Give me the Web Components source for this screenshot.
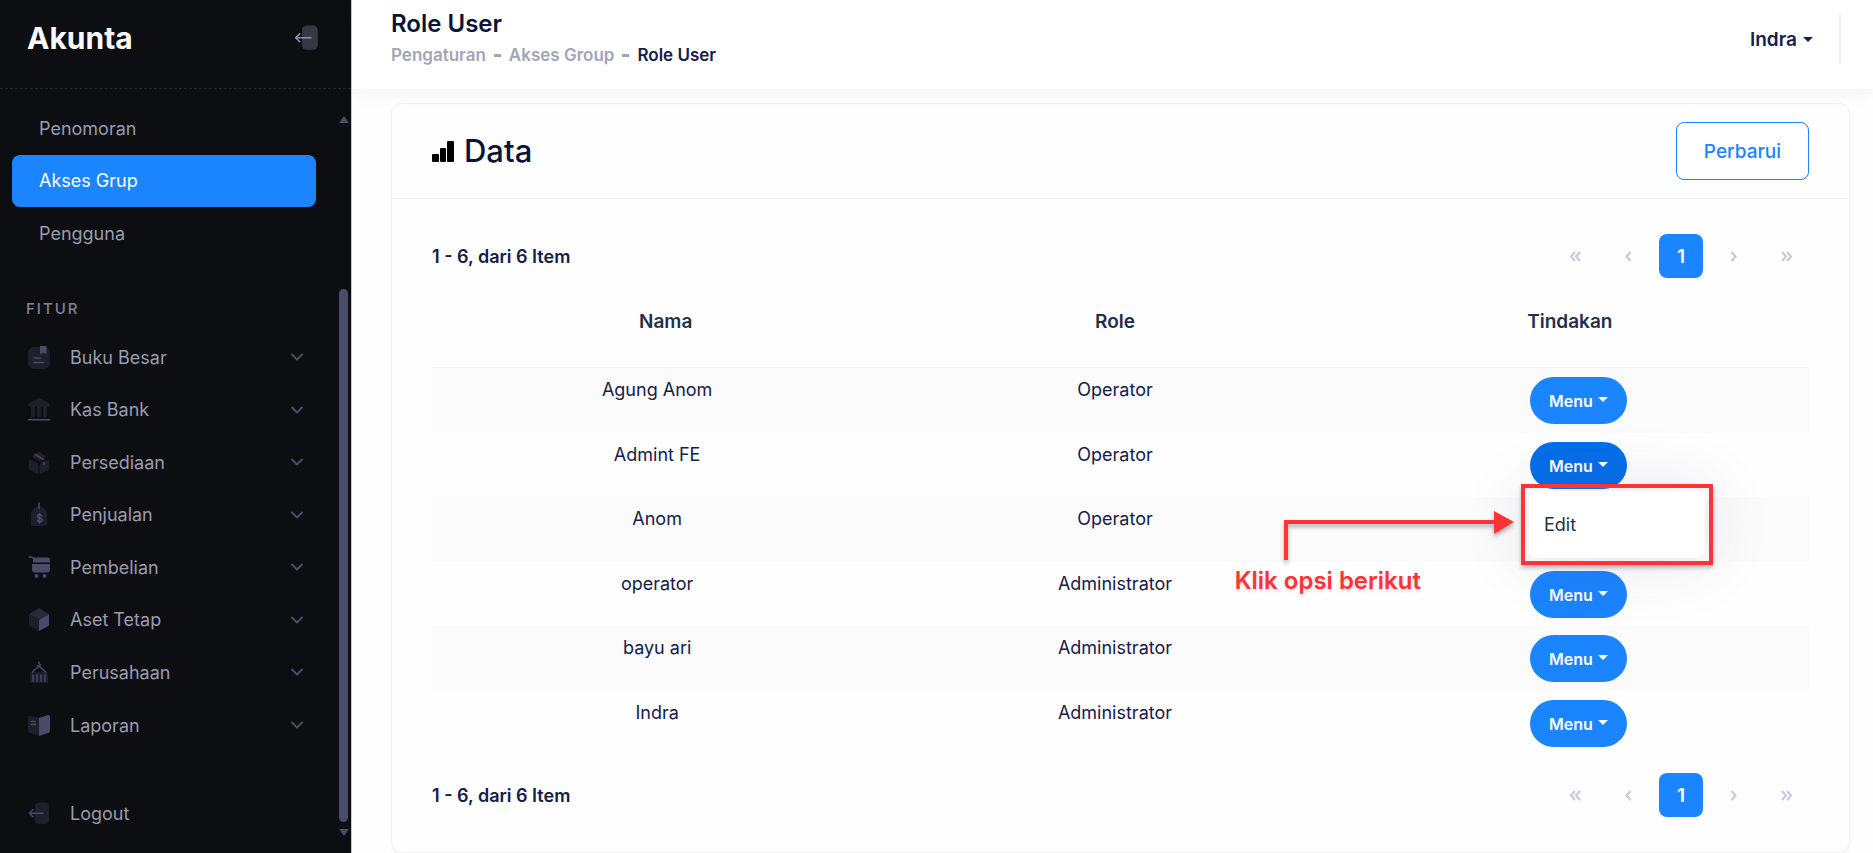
<!DOCTYPE html>
<html lang="id">
<head>
<meta charset="utf-8">
<title>Akunta - Role User</title>
<style>
  html, body { margin: 0; height: 100%; }
  body { background: #fefefe; color: #071437; font-family: Inter, "Liberation Sans", sans-serif; font-size: 18px; }
</style>
</head>
<body>
<akunta-app></akunta-app>
<script>
const define = (name, html, setup) => {
  const tpl = document.createElement('template');
  tpl.innerHTML = '<style>*{box-sizing:border-box}button{font:inherit;cursor:pointer}a{color:inherit;text-decoration:none}</style>' + html;
  customElements.define(name, class extends HTMLElement {
    constructor() {
      super();
      this.attachShadow({ mode: 'open' }).appendChild(tpl.content.cloneNode(true));
    }
    connectedCallback() { if (setup) setup(this, this.shadowRoot); }
  });
};

/* Two-tone icon set: .d is the faint layer, .l the brighter one. */
const ICONS = {
  ledger: '<rect class="d" x="0" y="1" width="22" height="22" rx="6"/><path class="l" d="M12 0h6.500v8.500l-3.200-2-3.300 2z"/><path class="s" d="M6 12h6.500M6 16.500h9.500"/>',
  bank: '<path class="d" d="M11 0l10 5q1.500 3-.500 3.500h-19Q-.500 8 1 5zM3 8h4v11H3zM9 8h4v11H9zM15 8h4v11h-4z"/><path class="s" d="M.500 21.700h21"/>',
  boxes: '<path class="d" d="M4.500 5L9.500 1.500q1.500-.800 3 0l5 3.500q1 .700 0 1.500L13 9.800q-1.200.700-2.500 0L4.500 6.500zM.800 10.500q.300-2.500 2.500-1.500L9 12q1.300.700 1.300 2v8q-.200 1.200-1.500.700L2 19q-1.200-.700-1.200-2zM21.200 10.500q-.300-2.500-2.500-1.500L13 12q-1.300.700-1.300 2v8q.2 1.200 1.500.700L20 19q1.200-.700 1.200-2z"/><path class="s" d="M7 3.500l8.500 4.800M15.800 11.500v2"/>',
  tag: '<path class="d" d="M5 6.500L9 3.500h4l4 3q2 1.500 2 3.500v10.500q0 2.500-2.500 2.500h-11Q3 23 3 20.500V10q0-2 2-3.500z"/><path class="s" d="M11 0v5.500M13.700 13q-.500-1.500-2.200-1.500-2 0-2 1.700t2.200 1.800q2.300.300 2.300 2t-2.200 1.800q-2 0-2.400-1.600M11.600 10.300v10"/>',
  cart: '<path class="l" d="M5 1.500h15q2 0 2 2V6.500H5zM4 8h18v5.500q0 3-3 3H7q-3 0-3-3z"/><path class="s" d="M1 1h2.500q1.500 0 2 2L6 5"/><circle class="l" cx="8.500" cy="20" r="2"/><circle class="l" cx="16.500" cy="20" r="2"/>',
  cube: '<path class="m" d="M11 0l10 6-10 6L1 6z"/><path class="d" d="M1 6.300l10 5.700v11l-8.500-4.500Q1 17.500 1 16z"/><path class="l" d="M21 6.300L11 12v11l8.500-4.500Q21 17.500 21 16z"/>',
  crane: '<path class="d" d="M2 11h18v11H2z"/><path class="s" d="M5 20v-6M9 20v-6M13 20v-6M17 20v-6M4.500 11L11 5l6.500 6M11 1v1.500l1.500 1.500L11 5.500 9.500 4.500"/>',
  book: '<path class="d" d="M2 1.500L11 4v18L2 19Q0 18.500 0 16.500V3Q0 1 2 1.500z"/><path class="l" d="M20 1L11 4v18l9-3q2-.500 2-2.500V3q0-2.500-2-2z"/><path class="s" d="M3.500 7.500h3.500M3.500 10.500h4"/>',
  exit: '<rect class="d" x="7" y="0.500" width="14" height="21.500" rx="4"/><path class="s" d="M1.500 11.300h13.500M5 7.800l-3.500 3.500L5 14.800"/>'
};

define('ui-icon', `
<style>
  :host { display: block; width: 22px; height: 23px; --d: #1f1f2b; --m: #2a2a3b; --l: #4b4a68; }
  svg { display: block; width: 100%; height: 100%; overflow: visible; }
  .d { fill: var(--d); } .m { fill: var(--m); } .l { fill: var(--l); }
  .s { fill: none; stroke: var(--s, var(--l)); stroke-width: 1.5; stroke-linecap: round; stroke-linejoin: round; }
</style><svg viewBox="0 0 22 23" aria-hidden="true"></svg>`,
(el, root) => { root.querySelector('svg').innerHTML = ICONS[el.getAttribute('name')]; });

define('nav-item', `
<style>
  :host { display: flex; flex: 1 1 0; min-height: 44px; }
  a { flex: 1; display: flex; align-items: center; padding: 0 13px 0 16px; gap: 20px; color: #9a9cae; border-radius: 8px; }
  :host([sub]) a { padding-left: 27px; }
  :host([active]) a { background: #1b84ff; color: #fff; }
  .label { flex: 1; }
  .chev { display: none; width: 12px; height: 8px; fill: none; stroke: #4b4a68; stroke-width: 2; stroke-linecap: round; stroke-linejoin: round; }
  :host([expand]) .chev { display: block; }
</style>
<a href="#"><span class="label"><slot></slot></span><svg class="chev" viewBox="0 0 12 8" aria-hidden="true"><path d="M1 1.500l5 5 5-5"/></svg></a>`,
(el, root) => {
  if (!el.hasAttribute('icon')) return;
  const i = document.createElement('ui-icon');
  i.setAttribute('name', el.getAttribute('icon'));
  root.querySelector('a').prepend(i);
});

define('side-bar', `
<style>
  :host { display: flex; flex-direction: column; width: 352px; flex: none; background: #0d0e12; border-right: 1px solid #c8c8ca; min-height: 100%; }
  header { height: 89px; display: flex; justify-content: space-between; padding: 0 32px 12px 27px; align-items: center; border-bottom: 1px dashed #232429; }
  .brand { color: #fafafa; font-size: 30px; font-weight: 700; }
  header button { background: none; border: 0; padding: 0; }
  header ui-icon { width: 25px; height: 26px; --d: #363843; --s: #8b8fae; }
  .wrap { flex: 1; display: flex; justify-content: space-between; padding: 13px 3px 13px 12px; }
  nav { width: 304px; display: flex; flex-direction: column; }
  h2 { margin: 0; height: 71px; padding: 39px 0 0 14px; font-size: 15px; line-height: 20px; font-weight: 500; letter-spacing: 2px; color: #7f839b; text-transform: uppercase; }
  .gap { height: 36px; }
  .bar { width: 9px; display: flex; flex-direction: column; align-items: center; padding: 14px 0 4px; }
  .bar i { border: solid transparent; border-width: 0 5px 7px; border-bottom-color: #4b4a68; }
  .bar b + i { border-width: 7px 5px 0; border-color: #4b4a68 transparent transparent; }
  .bar b { width: 9px; flex: 1; margin: 166px 0 7px; border-radius: 5px; background: #4b4a68; }
</style>
<header><span class="brand">Akunta</span><button aria-label="Tutup menu"><ui-icon name="exit"></ui-icon></button></header>
<div class="wrap">
  <nav>
    <nav-item sub>Penomoran</nav-item>
    <nav-item sub active>Akses Grup</nav-item>
    <nav-item sub>Pengguna</nav-item>
    <h2>Fitur</h2>
    <nav-item icon="ledger" expand>Buku Besar</nav-item>
    <nav-item icon="bank" expand>Kas Bank</nav-item>
    <nav-item icon="boxes" expand>Persediaan</nav-item>
    <nav-item icon="tag" expand>Penjualan</nav-item>
    <nav-item icon="cart" expand>Pembelian</nav-item>
    <nav-item icon="cube" expand>Aset Tetap</nav-item>
    <nav-item icon="crane" expand>Perusahaan</nav-item>
    <nav-item icon="book" expand>Laporan</nav-item>
    <div class="gap"></div>
    <nav-item icon="exit">Logout</nav-item>
  </nav>
  <div class="bar" aria-hidden="true"><i></i><b></b><i></i></div>
</div>`);

define('top-bar', `
<style>
  :host { display: flex; justify-content: space-between; height: 89px; padding: 9px 32px 0 39px; background: #fff; box-shadow: 0 8px 14px rgba(0,0,0,.035); position: relative; }
  h1 { margin: 0; font-size: 24px; line-height: 30px; font-weight: 600; }
  ol { list-style: none; display: flex; gap: 8px; margin: 4px 0 0; padding: 0; font-size: 17px; line-height: 24px; font-weight: 600; color: #a1a5b7; }
  li { display: flex; gap: 8px; }
  li + li::before { content: ""; width: 7px; height: 3px; margin-top: 11px; background: #a1a5b7; }
  li:last-child { color: #14204a; }
  .user { display: flex; height: 48px; margin-top: 6px; padding-right: 26px; border-right: 2px solid #f1f1f4; }
  .user button { display: flex; align-items: center; gap: 6px; padding: 0; border: 0; background: none; font-size: 19px; font-weight: 600; color: #14204a; }
  .user button::after { content: ""; border: 5px solid transparent; border-top-color: #14204a; border-bottom: 0; }
</style>
<div><h1>Role User</h1>
<ol><li><a href="#">Pengaturan</a></li><li><a href="#">Akses Group</a></li><li>Role User</li></ol></div>
<div class="user"><button>Indra</button></div>`);

define('page-nav', `
<style>
  :host { display: flex; align-items: center; justify-content: space-between; font-weight: 600; }
  span { color: #14204a; }
  nav { display: flex; gap: 9px; }
  button { width: 44px; height: 44px; padding: 0; border: 0; border-radius: 8px; background: none; color: #c4c8d8; display: grid; place-items: center; }
  button.on { background: #1b84ff; color: #fff; font-size: 19px; }
  svg { width: 12px; height: 11px; fill: none; stroke: currentColor; stroke-width: 2; }
</style>
<span><slot></slot></span>
<nav aria-label="Halaman">
  <button aria-label="Pertama"><svg viewBox="0 0 12 11"><path d="M6 1L2 5.500 6 10M11 1L7 5.500l4 4.500"/></svg></button>
  <button aria-label="Sebelumnya"><svg viewBox="0 0 12 11"><path d="M8.500 1l-4 4.500 4 4.500"/></svg></button>
  <button class="on">1</button>
  <button aria-label="Berikutnya"><svg viewBox="0 0 12 11"><path d="M3.500 1l4 4.500-4 4.500"/></svg></button>
  <button aria-label="Terakhir"><svg viewBox="0 0 12 11"><path d="M1 1l4 4.500L1 10M6 1l4 4.500L6 10"/></svg></button>
</nav>`);

define('row-menu', `
<style>
  :host { display: inline-block; position: relative; vertical-align: top; text-align: left; }
  .trigger { display: flex; align-items: center; gap: 5px; height: 47px; padding: 0 19px; border: 0; border-radius: 24px; background: #1b84ff; color: #fff; font-size: 16px; font-weight: 600; }
  .trigger::after { content: ""; border: 5px solid transparent; border-top-color: #fff; border-bottom: 0; margin-bottom: 3px; }
  .menu { display: none; }
  :host([open]) { z-index: 2; }
  :host([open]) .trigger { background: #056ee9; }
  :host([open]) .menu { display: block; position: absolute; left: -1px; top: 49px; width: 176px; padding: 8px 0; border-radius: 8px; background: #fff; box-shadow: 0 0 66px rgba(82,63,105,.15); }
  .menu a { display: block; padding: 0 15px; line-height: 51px; color: #252f4a; }
</style>
<button class="trigger">Menu</button>
<div class="menu"><a href="#">Edit</a></div>
<slot></slot>`);

/* Callout: a frame round the open drop-down, an arrow and a caption beside it. */
define('hint-callout', `
<style>
  :host { position: absolute; left: -9px; top: 42px; width: 0; height: 0; pointer-events: none; color: #ff3333; }
  .frame { position: absolute; left: 0; top: 0; width: 192px; height: 81px; border: 4px solid #ff3333; box-shadow: 0 3px 4px rgba(0,0,0,.25); }
  svg { position: absolute; right: 7px; top: 24px; width: 230px; height: 54px; overflow: visible; filter: drop-shadow(0 3px 2px rgba(0,0,0,.3)); }
  p { position: absolute; right: 100px; top: 82px; margin: 0; font-size: 24px; line-height: 30px; font-weight: 600; white-space: nowrap; text-shadow: 0 2px 3px rgba(0,0,0,.14); }
</style>
<div class="frame"></div>
<svg viewBox="0 0 230 54" aria-hidden="true"><path d="M2 52V14H212" fill="none" stroke="#f33" stroke-width="4"/><path d="M210 3l20 11-20 12z" fill="#f33"/></svg>
<p><slot></slot></p>`);

define('role-table', `
<style>
  :host { display: block; }
  table { width: 100%; border-collapse: separate; border-spacing: 0; table-layout: fixed; }
  .n { width: 32.7%; } .r { width: 33.8%; }
  th { height: 90px; padding: 0 0 3px; font-size: 19px; font-weight: 600; color: #252f4a; border-bottom: 1px solid #f3f3f5; }
  th:first-child { padding-left: 17px; } th:last-child { padding-right: 17px; }
  td { height: 65px; padding: 9px 0; line-height: 26px; text-align: center; vertical-align: top; color: #14204a; }
  tr:nth-child(odd) td { background: #fbfbfb; }
  tr:nth-child(even) td { height: 64px; padding-bottom: 8px; }
  /* The open drop-down lies over the next row's button. */
  tr.open + tr row-menu { visibility: hidden; }
</style>
<table><colgroup><col class="n"><col class="r"><col></colgroup>
<thead><tr><th scope="col">Nama</th><th scope="col">Role</th><th scope="col">Tindakan</th></tr></thead><tbody></tbody></table>`,
(el, root) => {
  const rows = [['Agung Anom', 'Operator'], ['Admint FE', 'Operator', 1], ['Anom', 'Operator'], ['operator', 'Administrator'], ['bayu ari', 'Administrator'], ['Indra', 'Administrator']];
  root.querySelector('tbody').innerHTML = rows.map(([n, r, open]) =>
    `<tr${open ? ' class="open"' : ''}><td>${n}</td><td>${r}</td><td><row-menu${open ? ' open><hint-callout>Klik opsi berikut</hint-callout>' : '>'}</row-menu></td></tr>`).join('');
});

define('data-card', `
<style>
  :host { display: block; margin: 14px 23px 0 39px; border: 1px solid #f1f1f4; border-radius: 11px; background: #fefefe; box-shadow: 0 3px 4px rgba(0,0,0,.03); }
  header { display: flex; align-items: center; justify-content: space-between; height: 95px; padding: 0 40px; border-bottom: 1px solid #f1f1f4; }
  h2 { margin: 0; display: flex; align-items: center; gap: 10px; font-size: 31px; line-height: 40px; font-weight: 500; }
  h2 svg { width: 22px; height: 21px; }
  header button { height: 58px; padding: 0 27px; border: 1px solid #1b84ff; border-radius: 8px; background: #fff; color: #1b84ff; font-size: 19px; font-weight: 500; }
  .body { padding: 35px 40px; }
  .foot { margin-top: 18px; }
</style>
<header><h2><svg viewBox="0 0 22 21" aria-hidden="true"><rect x="0" y="13" width="7" height="8" rx="1"/><rect x="8" y="7" width="6" height="14" rx="1"/><rect x="15" y="0" width="7" height="21" rx="1"/></svg>Data</h2><button>Perbarui</button></header>
<div class="body">
  <page-nav>1 - 6, dari 6 Item</page-nav>
  <role-table></role-table>
  <page-nav class="foot">1 - 6, dari 6 Item</page-nav>
</div>`);

define('akunta-app', `
<style>
  :host { display: flex; min-height: 100vh; }
  main { flex: 1; min-width: 0; }
</style>
<side-bar></side-bar>
<main><top-bar></top-bar><data-card></data-card></main>`);
</script>
</body>
</html>
